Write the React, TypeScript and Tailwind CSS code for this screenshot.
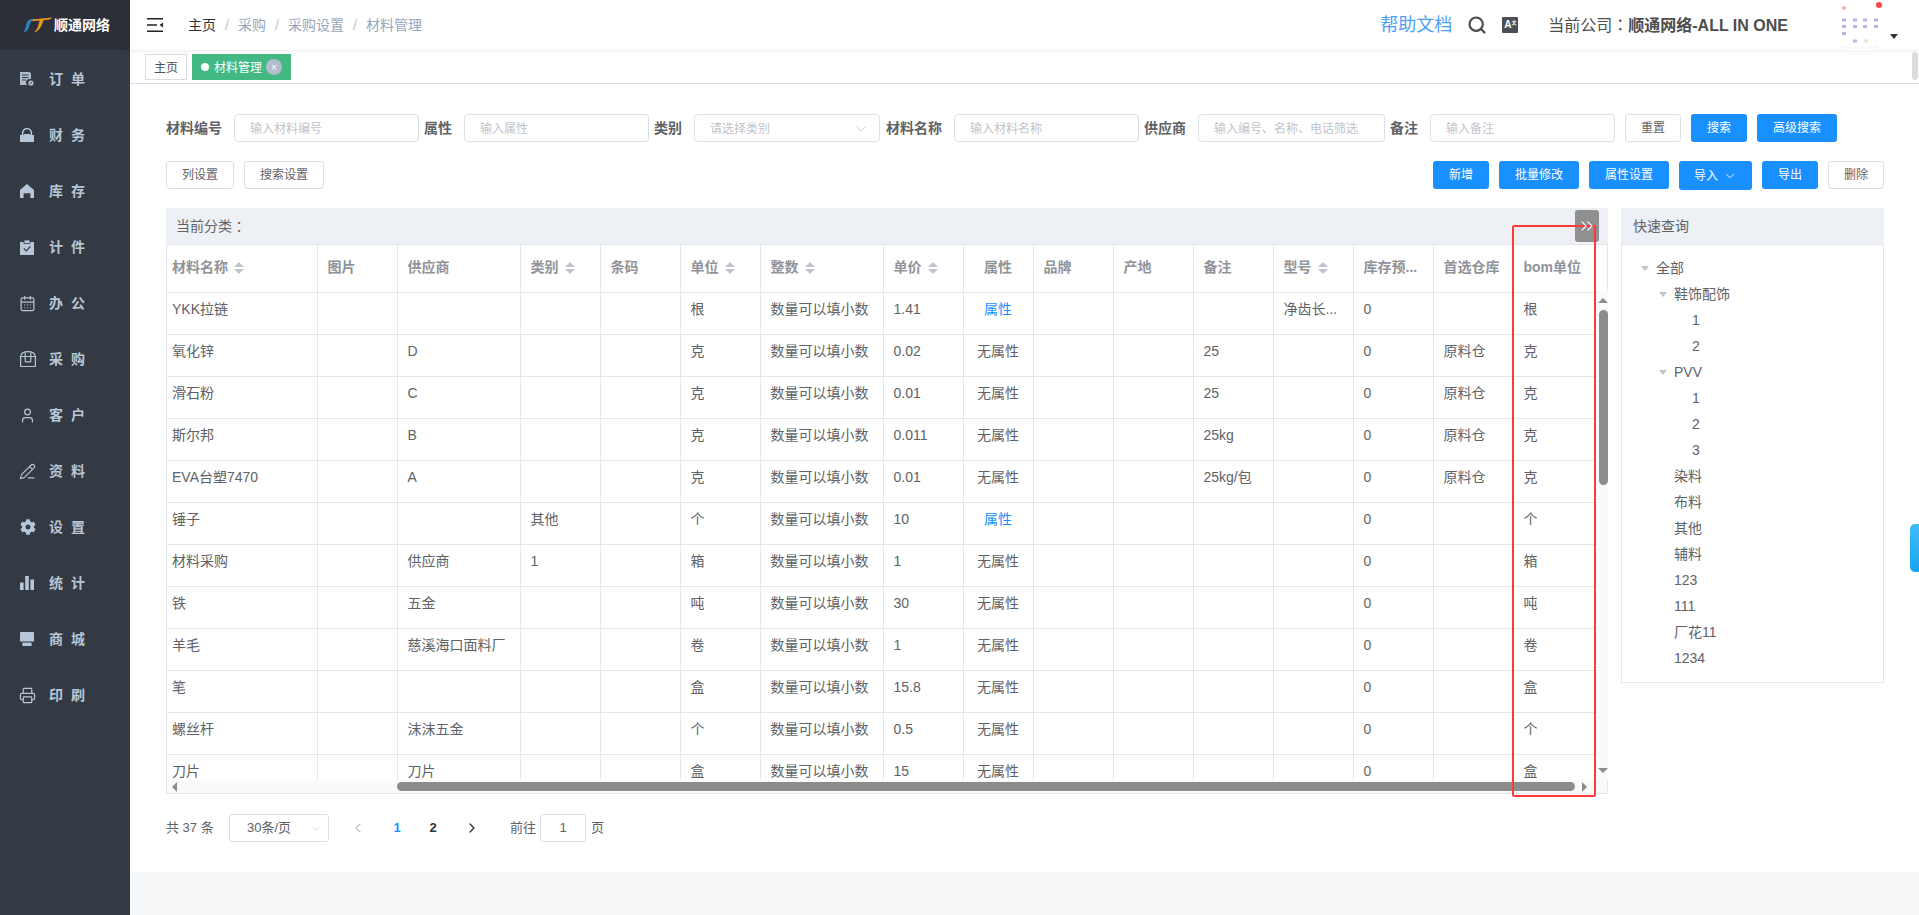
import { CalendarDays, ChevronDown, ChevronLeft, ChevronRight, ChevronsRight, PencilLine, Printer, Search, User } from "lucide-react";
import { FaCog } from "react-icons/fa";
import type { ReactNode } from "react";

const OrderIcon = () => (
  <svg viewBox="0 0 14 14" className="w-[14px] h-[14px]" fill="#aebccd">
    <path d="M0 0h9.5L11 1.5V7a3.6 3.6 0 0 0-3.8 6H0z" />
    <path d="M2 3h6.5M2 5.5h6.5M2 8h4" stroke="#343a43" strokeWidth="1" />
    <circle cx="11" cy="11" r="2.6" fill="#aebccd" />
    <path d="M10 12l2-2" stroke="#343a43" strokeWidth=".9" />
  </svg>
);
const LockIcon = () => (
  <svg viewBox="0 0 14 14" className="w-[14px] h-[14px]" fill="#b7c6d8">
    <path d="M0 7h14v7H0z" />
    <path d="M2.6 7V5a4.4 4.4 0 0 1 8.8 0v2" fill="none" stroke="#b7c6d8" strokeWidth="1.5" />
    <path d="M4 6h6v1H4z" />
  </svg>
);
const HouseIcon = () => (
  <svg viewBox="0 0 14 14" className="w-[14px] h-[14px]" fill="#b7c6d8">
    <path d="M7 0L14 6v8h-3.6V9.2H3.6V14H0V6z" />
  </svg>
);
const ClipIcon = () => (
  <svg viewBox="0 0 14 15" className="w-[14px] h-[15px]">
    <path d="M0 2h14v13H0z" fill="#b7c6d8" />
    <path d="M4 0h6v3.5H4z" fill="#b7c6d8" stroke="#343a43" strokeWidth=".8" />
    <path d="M3.8 8.5l2.4 2.4 4.2-4.4" fill="none" stroke="#343a43" strokeWidth="1.1" />
  </svg>
);
const BoxIcon = () => (
  <svg viewBox="0 0 16 16" className="w-[16px] h-[16px]" fill="none" stroke="#b7c6d8" strokeWidth="1.2">
    <path d="M.6 5.5h14.8v10H.6zM.6 5.5C1.2 2 3.5.6 8 .6s6.8 1.4 7.4 4.9" />
    <path d="M5.2 1.5v8.4a1 1 0 0 0 1 1h3.6a1 1 0 0 0 1-1V1.5" />
  </svg>
);
const BarsIcon = () => (
  <svg viewBox="0 0 14 14" className="w-[14px] h-[14px]" fill="#b7c6d8">
    <path d="M0 6.5h3.6V14H0zM5.2 0h3.6v14H5.2zM10.4 3.5H14V14h-3.6z" />
  </svg>
);
const ShopIcon = () => (
  <svg viewBox="0 0 14 14" className="w-[14px] h-[14px]" fill="#b7c6d8">
    <path d="M1 0h12a1 1 0 0 1 1 1v8.6H0V1a1 1 0 0 1 1-1z" />
    <path d="M2.4 10.6h9.2V14H2.4z" />
  </svg>
);

const SortIcon = () => (
  <span className="inline-flex flex-col gap-[2px] ml-[6px] align-middle">
    <span className="w-0 h-0 border-x-[5px] border-x-transparent border-b-[5px] border-b-[#c0c4cc]" />
    <span className="w-0 h-0 border-x-[5px] border-x-transparent border-t-[5px] border-t-[#c0c4cc]" />
  </span>
);

// 冒号要居中，SC 字形偏左下
const Colon = () => <span className="[font-family:'Noto_Sans_CJK_TC',sans-serif]">：</span>;

const navItems: { label: string; icon: ReactNode }[] = [
  { label: "订单", icon: <OrderIcon /> },
  { label: "财务", icon: <LockIcon /> },
  { label: "库存", icon: <HouseIcon /> },
  { label: "计件", icon: <ClipIcon /> },
  { label: "办公", icon: <CalendarDays size={17} strokeWidth={1.7} color="#b7c6d8" className="-ml-px" /> },
  { label: "采购", icon: <BoxIcon /> },
  { label: "客户", icon: <User size={17} strokeWidth={1.7} color="#b7c6d8" className="-ml-px" /> },
  { label: "资料", icon: <PencilLine size={17} strokeWidth={1.6} color="#b7c6d8" className="-ml-px" /> },
  { label: "设置", icon: <FaCog size={16} color="#b7c6d8" /> },
  { label: "统计", icon: <BarsIcon /> },
  { label: "商城", icon: <ShopIcon /> },
  { label: "印刷", icon: <Printer size={17} strokeWidth={1.7} color="#b7c6d8" className="-ml-px" /> },
];

const columns: { title: string; width: string; sort?: boolean; center?: boolean }[] = [
  { title: "材料名称", width: "w-[150px]", sort: true },
  { title: "图片", width: "w-[80px]" },
  { title: "供应商", width: "w-[123px]" },
  { title: "类别", width: "w-[80px]", sort: true },
  { title: "条码", width: "w-[80px]" },
  { title: "单位", width: "w-[80px]", sort: true },
  { title: "整数", width: "w-[123px]", sort: true },
  { title: "单价", width: "w-[80px]", sort: true },
  { title: "属性", width: "w-[70px]", center: true },
  { title: "品牌", width: "w-[80px]" },
  { title: "产地", width: "w-[80px]" },
  { title: "备注", width: "w-[80px]" },
  { title: "型号", width: "w-[80px]", sort: true },
  { title: "库存预...", width: "w-[80px]" },
  { title: "首选仓库", width: "w-[80px]" },
  { title: "bom单位", width: "w-[84px]" },
];

const INT = "数量可以填小数";
const NO = "无属性";
const rows: string[][] = [
  ["YKK拉链", "", "", "", "", "根", INT, "1.41", "属性", "", "", "", "净齿长...", "0", "", "根"],
  ["氧化锌", "", "D", "", "", "克", INT, "0.02", NO, "", "", "25", "", "0", "原料仓", "克"],
  ["滑石粉", "", "C", "", "", "克", INT, "0.01", NO, "", "", "25", "", "0", "原料仓", "克"],
  ["斯尔邦", "", "B", "", "", "克", INT, "0.011", NO, "", "", "25kg", "", "0", "原料仓", "克"],
  ["EVA台塑7470", "", "A", "", "", "克", INT, "0.01", NO, "", "", "25kg/包", "", "0", "原料仓", "克"],
  ["锤子", "", "", "其他", "", "个", INT, "10", "属性", "", "", "", "", "0", "", "个"],
  ["材料采购", "", "供应商", "1", "", "箱", INT, "1", NO, "", "", "", "", "0", "", "箱"],
  ["铁", "", "五金", "", "", "吨", INT, "30", NO, "", "", "", "", "0", "", "吨"],
  ["羊毛", "", "慈溪海口面料厂", "", "", "卷", INT, "1", NO, "", "", "", "", "0", "", "卷"],
  ["笔", "", "", "", "", "盒", INT, "15.8", NO, "", "", "", "", "0", "", "盒"],
  ["螺丝杆", "", "沫沫五金", "", "", "个", INT, "0.5", NO, "", "", "", "", "0", "", "个"],
  ["刀片", "", "刀片", "", "", "盒", INT, "15", NO, "", "", "", "", "0", "", "盒"],
];

const tree: { label: string; level: number; open?: boolean }[] = [
  { label: "全部", level: 0, open: true },
  { label: "鞋饰配饰", level: 1, open: true },
  { label: "1", level: 2 },
  { label: "2", level: 2 },
  { label: "PVV", level: 1, open: true },
  { label: "1", level: 2 },
  { label: "2", level: 2 },
  { label: "3", level: 2 },
  { label: "染料", level: 1 },
  { label: "布料", level: 1 },
  { label: "其他", level: 1 },
  { label: "辅料", level: 1 },
  { label: "123", level: 1 },
  { label: "111", level: 1 },
  { label: "厂花11", level: 1 },
  { label: "1234", level: 1 },
];

const filters = [
  { label: "材料编号", placeholder: "输入材料编号", w: "w-[185px] mr-[5px]" },
  { label: "属性", placeholder: "输入属性", w: "w-[185px] mr-[5px]" },
  { label: "类别", placeholder: "请选择类别", w: "w-[186px] mr-[6px]", select: true },
  { label: "材料名称", placeholder: "输入材料名称", w: "w-[185px] mr-[5px]" },
  { label: "供应商", placeholder: "输入编号、名称、电话筛选", w: "w-[187px] mr-[5px]" },
  { label: "备注", placeholder: "输入备注", w: "w-[185px] mr-[10px]" },
];

const Btn = ({ children, primary, w }: { children: ReactNode; primary?: boolean; w: string }) => (
  <button
    className={`h-[28px] ${w} shrink-0 rounded-[3px] text-[12px] flex items-center justify-center ${
      primary ? "bg-[#1890ff] text-white" : "bg-white border border-[#dcdfe6] text-[#606266]"
    }`}
  >
    {children}
  </button>
);

export default function App() {
  return (
    <div className="relative flex w-full h-screen overflow-hidden bg-[#f5f7f9] [font-family:'Liberation_Sans','Noto_Sans_CJK_SC',sans-serif]">
      {/* 左侧菜单 */}
      <aside className="w-[130px] shrink-0 bg-[#343a43] flex flex-col">
        <div className="h-[50px] bg-[#2d3039] flex items-center pl-[22px] mb-px">
          <svg viewBox="0 0 30 16" className="w-[30px] h-[16px] shrink-0">
            <path d="M1 15.5C3.5 14 4 7 5.5 4.5 6.8 2.5 9 2 11.5 1.8L10.5 4C8.5 4.3 8 6 7.4 8.5 6.8 11.5 5 15 1 15.5z" fill="#2d86c4" />
            <path d="M11 2.2C16 1.8 24 1.2 30 .4L28.5 2.2 21.5 3.2C20 7 18.5 14 12 15.6 15.5 12.5 16.6 8 17.6 3.6L10.4 4.2z" fill="#e8961f" />
          </svg>
          <span className="ml-[2px] text-white font-bold text-[14px]">顺通网络</span>
        </div>
        {navItems.map((item) => (
          <div key={item.label} className="h-[56px] flex items-center pl-[20px] shrink-0">
            <span className="w-[29px] shrink-0">{item.icon}</span>
            <span className="text-[14px] font-bold text-[#b7c6d8] tracking-[8px]">{item.label}</span>
          </div>
        ))}
      </aside>

      <div className="flex-1 min-w-0 flex flex-col">
        {/* 顶部 */}
        <header className="h-[50px] shrink-0 bg-white flex items-center shadow-[0_1px_4px_rgba(0,21,41,0.08)] relative">
          <svg viewBox="0 0 16 14" className="ml-[17px] w-[16px] h-[14px]" fill="#222">
            <path d="M0 0h16v1.6H0zM0 6.2h10v1.6H0zM0 12.4h16V14H0z" />
            <path d="M16 4.4v5.2L12.6 7z" />
          </svg>
          <nav className="ml-[25px] flex items-center text-[14px] text-[#97a8be]">
            <span className="text-[#303133]">主页</span>
            <span className="w-[22px] text-center text-[#c0c4cc]">/</span>
            <span>采购</span>
            <span className="w-[22px] text-center text-[#c0c4cc]">/</span>
            <span>采购设置</span>
            <span className="w-[22px] text-center text-[#c0c4cc]">/</span>
            <span>材料管理</span>
          </nav>
          <div className="flex-1" />
          <span className="text-[18px] text-[#4a9ff5]">帮助文档</span>
          <Search size={20} strokeWidth={2.6} color="#4d4d4d" className="ml-[15px]" />
          <span className="ml-[15px] w-[16px] h-[16px] bg-[#4a4f55] rounded-[1px] text-white text-[10px] font-bold leading-[16px] pl-[2px] flex">
            A<span className="text-[5px] leading-[10px]">文</span>
          </span>
          <span className="ml-[30px] text-[16px] text-[#4d4d4d]">
            当前公司<Colon /><span className="font-bold">顺通网络-ALL IN ONE</span>
          </span>
          <svg viewBox="0 0 62 50" className="ml-[50px] mr-[19px] w-[62px] h-[50px] shrink-0">
            <circle cx="6" cy="8" r="2" fill="#f0b8a0" />
            <circle cx="41" cy="5" r="3" fill="#f44" />
            <path d="M2 16h4M2 46l4 2h30l4-2" stroke="#f0f0f0" fill="none" />
            {[6, 17, 27, 38].map((x) => (
              <g key={x} fill="#b5b5e8">
                <rect x={x - 2} y="18.5" width="4" height="3" />
                <rect x={x - 2} y="25" width="4" height="3" />
              </g>
            ))}
            <rect x="4" y="32" width="4" height="3" fill="#b5b5e8" />
            <rect x="15" y="39.5" width="4" height="3" fill="#b5b5e8" />
            <rect x="26" y="39.5" width="4" height="3" fill="#e5e5e5" />
            <path d="M52 34h8l-4 5z" fill="#333" />
          </svg>
        </header>

        {/* 标签栏 */}
        <div className="h-[34px] shrink-0 bg-white border-b border-[#d8dce5] flex items-start pt-[4px] pl-[15px] gap-[5px] text-[12px]">
          <span className="h-[26px] w-[42px] border border-[#d8dce5] flex items-center justify-center pt-px text-[#495060]">主页</span>
          <span className="h-[26px] w-[99px] bg-[#42b983] text-white flex items-center pl-[9px]">
            <span className="w-[8px] h-[8px] rounded-full bg-white mr-[5px]" />
            <span className="pt-px">材料管理</span>
            <span className="ml-[4px] w-[16px] h-[16px] rounded-full bg-[#b4bccc] flex items-center justify-center text-[11px] leading-none">×</span>
          </span>
        </div>

        {/* 主体 */}
        <main className="h-[788px] shrink-0 bg-white pl-[36px] pr-[35px] pt-[30px]">
          <div className="flex items-center h-[28px] mb-[19px]">
            {filters.map((f) => (
              <div key={f.label} className="flex items-center">
                <span className="text-[14px] font-bold text-[#606266] mr-[12px] whitespace-nowrap">{f.label}</span>
                <div className={`${f.w} h-[28px] border border-[#dcdfe6] rounded-[4px] flex items-center justify-between pl-[15px] pr-[10px] pt-px text-[12px] text-[#c0c4cc] whitespace-nowrap overflow-hidden`}>
                  {f.placeholder}
                  {f.select && <ChevronDown size={16} strokeWidth={1.2} />}
                </div>
              </div>
            ))}
            <div className="flex gap-[10px]">
              <Btn w="w-[56px]">重置</Btn>
              <Btn w="w-[56px]" primary>搜索</Btn>
              <Btn w="w-[80px]" primary>高级搜索</Btn>
            </div>
          </div>

          <div className="flex items-start h-[28px] mb-[19px] gap-[10px]">
            <Btn w="w-[68px]">列设置</Btn>
            <Btn w="w-[80px]">搜索设置</Btn>
            <div className="flex-1" />
            <Btn w="w-[56px]" primary>新增</Btn>
            <Btn w="w-[80px]" primary>批量修改</Btn>
            <Btn w="w-[80px]" primary>属性设置</Btn>
            <button className="h-[29px] w-[73px] shrink-0 rounded-[3px] text-[12px] flex items-center justify-center gap-[5px] bg-[#1890ff] text-white">
              导入 <ChevronDown size={14} strokeWidth={1.5} />
            </button>
            <Btn w="w-[56px]" primary>导出</Btn>
            <Btn w="w-[56px]">删除</Btn>
          </div>

          <div className="flex justify-between">
            {/* 表格 */}
            <section className="w-[1442px] shrink-0">
              <div className="h-[37px] bg-[#edf0f5] border-b border-[#e4e7ed] flex items-center pl-[10px] text-[14px] text-[#606266] relative">
                当前分类<Colon />
                <span className="absolute right-[9px] top-[2px] w-[24px] h-[32px] rounded-[3px] bg-[#909090] flex items-center justify-center text-white">
                  <ChevronsRight size={20} strokeWidth={1.3} className="relative z-10" />
                </span>
              </div>
              <div className="border-l border-r border-b border-[#e4e7ed]">
                <div className="flex h-[535px]">
                  <div className="w-[1430px] overflow-hidden shrink-0">
                    <table className="table-fixed w-[1430px] text-[14px] text-[#606266]">
                      <colgroup>
                        {columns.map((c) => (
                          <col key={c.title} className={c.width} />
                        ))}
                      </colgroup>
                      <thead>
                        <tr className="h-[47px]">
                          {columns.map((c, i) => (
                            <th
                              key={c.title}
                              className={`border-b border-r last:border-r-0 border-[#e4e7ed] font-bold text-[#909399] whitespace-nowrap pb-[2px] ${
                                i === 0 ? "pl-[5px]" : "pl-[10px]"
                              } ${c.center ? "text-center pr-[10px]" : "text-left"}`}
                            >
                              {c.title}
                              {c.sort && <SortIcon />}
                            </th>
                          ))}
                        </tr>
                      </thead>
                      <tbody>
                        {rows.map((row) => (
                          <tr key={row[0]} className="h-[42px]">
                            {row.map((cell, i) => (
                              <td
                                key={i}
                                className={`border-b border-r last:border-r-0 border-[#e4e7ed] align-top pt-[5px] leading-[22px] whitespace-nowrap overflow-hidden ${
                                  i === 0 ? "pl-[5px]" : "pl-[10px]"
                                } ${i === 8 ? "text-center pr-[10px]" : ""} ${cell === "属性" ? "text-[#1890ff]" : ""}`}
                              >
                                {cell}
                              </td>
                            ))}
                          </tr>
                        ))}
                      </tbody>
                    </table>
                  </div>
                  {/* 竖向滚动条 */}
                  <div className="flex-1 mt-[46px] bg-[#fafafa] flex flex-col items-center pl-[1px]">
                    <span className="mt-[7px] w-0 h-0 border-x-[5px] border-x-transparent border-b-[5px] border-b-[#8c8c8c]" />
                    <span className="mt-[7px] w-[9px] h-[175px] rounded-[5px] bg-[#8c8c8c]" />
                    <span className="mt-auto mb-[7px] w-0 h-0 border-x-[5px] border-x-transparent border-t-[5px] border-t-[#8c8c8c]" />
                  </div>
                </div>
                {/* 横向滚动条 */}
                <div className="h-[13px] bg-[#fafafa] flex items-center">
                  <span className="ml-[5px] w-0 h-0 border-y-[5px] border-y-transparent border-r-[5px] border-r-[#8c8c8c]" />
                  <span className="ml-[220px] w-[1178px] h-[9px] rounded-[5px] bg-[#8c8c8c]" />
                  <span className="ml-[7px] w-0 h-0 border-y-[5px] border-y-transparent border-l-[5px] border-l-[#8c8c8c]" />
                </div>
              </div>
            </section>

            {/* 快速查询 */}
            <section className="w-[263px] shrink-0">
              <div className="h-[37px] bg-[#edf0f5] flex items-center pl-[12px] text-[14px] text-[#606266]">快速查询</div>
              <ul className="border-x border-b border-t border-[#e4e7ed] -mt-px pt-[10px] pb-[11px] pl-[10px] text-[14px] text-[#606266]">
                {tree.map((n, i) => (
                  <li
                    key={i}
                    className={`h-[26px] flex items-center ${
                      n.level === 0 ? "pl-0" : n.level === 1 ? "pl-[18px]" : "pl-[36px]"
                    }`}
                  >
                    <span className="w-[24px] flex justify-center pl-[2px] shrink-0">
                      {n.open && (
                        <span className="w-0 h-0 border-x-[4px] border-x-transparent border-t-[5px] border-t-[#c0c4cc]" />
                      )}
                    </span>
                    {n.label}
                  </li>
                ))}
              </ul>
            </section>
          </div>

          {/* 分页 */}
          <div className="mt-[20px] h-[28px] flex items-center text-[13px] text-[#606266]">
            <span className="w-[63px] whitespace-nowrap">共 37 条</span>
            <div className="w-[100px] h-[28px] border border-[#dcdfe6] rounded-[3px] flex items-center pl-[17px] pr-[5px] justify-between">
              30条/页
              <ChevronDown size={13} strokeWidth={1.2} color="#c0c4cc" />
            </div>
            <ChevronLeft size={16} strokeWidth={2} color="#c0c4cc" className="ml-[21px]" />
            <span className="ml-[23px] w-[16px] text-center font-bold text-[#1890ff]">1</span>
            <span className="ml-[20px] w-[16px] text-center font-bold text-[#303133]">2</span>
            <ChevronRight size={16} strokeWidth={2} color="#303133" className="ml-[23px]" />
            <span className="ml-[30px]">前往</span>
            <div className="ml-[4px] w-[46px] h-[28px] border border-[#dcdfe6] rounded-[3px] flex items-center justify-center">1</div>
            <span className="ml-[5px]">页</span>
          </div>
        </main>
      </div>

      {/* 浮动元素 */}
      <div className="absolute right-[1px] top-[52px] w-[6px] h-[28px] rounded-[3px] bg-[#dcdcdc]" />
      <div className="absolute right-0 top-[524px] w-[9px] h-[48px] rounded-l-[5px] bg-gradient-to-b from-[#3ebcf7] to-[#12a5f0]" />
      <div className="absolute left-[1512px] top-[225px] w-[84px] h-[572px] border-2 border-[#ff3a3a] rounded-[2px] pointer-events-none" />
    </div>
  );
}
